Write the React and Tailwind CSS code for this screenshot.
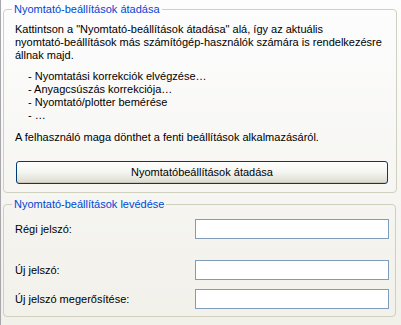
export default function App() {
  const font = "font-['Liberation_Sans',Arial,sans-serif]";

  return (
    <div
      className={`h-[325px] w-[401px] overflow-hidden border-l border-[#a7a6aa] bg-gradient-to-b from-[#fdfdfe] to-[#f1f0e9] pl-[2px] pr-[5px] pt-[2px] text-[11px] leading-[13px] text-black ${font}`}
    >
      {/* upper group */}
      <fieldset className="h-[191px] rounded-[4px] border border-[#d0d0bf] pl-[11px] pr-[8px]">
        <legend className="ml-[-3px] px-[2px] leading-[14px] text-[#0046d5]">
          Nyomtató-beállítások átadása
        </legend>
        <p className="mt-[7px] whitespace-nowrap">
          Kattintson a "Nyomtató-beállítások átadása" alá, így az aktuális
          <br />
          nyomtató-beállítások más számítógép-használók számára is rendelkezésre
          <br />
          állnak majd.
        </p>
        <ul className="mt-[8px] pl-[13px]">
          <li>- Nyomtatási korrekciók elvégzése…</li>
          <li>- Anyagcsúszás korrekciója…</li>
          <li>- Nyomtató/plotter bemérése</li>
          <li>- …</li>
        </ul>
        <p className="mt-[9px]">
          A felhasználó maga dönthet a fenti beállítások alkalmazásáról.
        </p>
        <button
          type="button"
          className="ml-[1px] mt-[17px] h-[23px] w-[372px] rounded-[3px] border border-[#003c74] bg-gradient-to-b from-[#ffffff] via-[#f4f4f0] to-[#dcdad0] text-center shadow-[inset_0_-1px_0_#c9c7ba]"
        >
          Nyomtatóbeállítások átadása
        </button>
      </fieldset>

      {/* lower group */}
      <fieldset className="mt-[4px] h-[120px] rounded-[4px] border border-[#d0d0bf] pl-[11px] pr-[5px]">
        <legend className="ml-[-3px] px-[2px] leading-[14px] text-[#0046d5]">
          Nyomtató-beállítások levédése
        </legend>
        <div className="mt-[8px] flex items-center">
          <span className="w-[180px]">Régi jelszó:</span>
          <div className="h-[20px] w-[194px] border border-[#7f9db9] bg-white" />
        </div>
        <div className="mt-[21px] flex items-center">
          <span className="w-[180px]">Új jelszó:</span>
          <div className="h-[20px] w-[194px] border border-[#7f9db9] bg-white" />
        </div>
        <div className="mt-[9px] flex items-center">
          <span className="w-[180px]">Új jelszó megerősítése:</span>
          <div className="h-[20px] w-[194px] border border-[#7f9db9] bg-white" />
        </div>
      </fieldset>
    </div>
  );
}
